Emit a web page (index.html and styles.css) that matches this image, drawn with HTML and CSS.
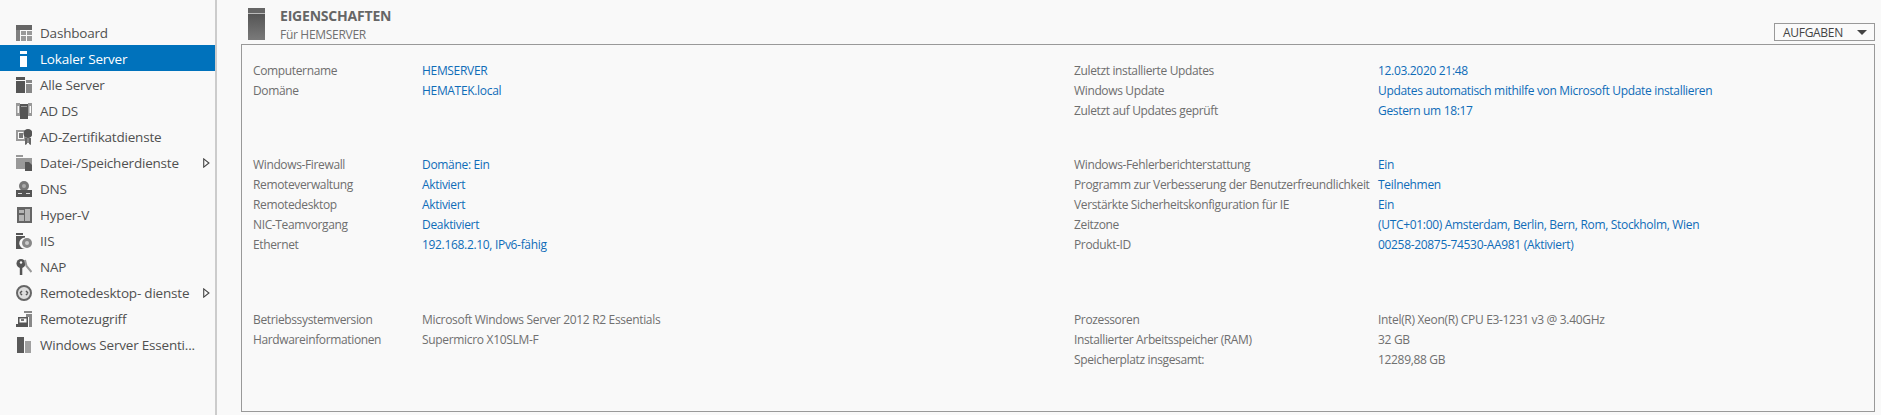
FILE: index.html
```html
<!DOCTYPE html>
<html lang="de">
<head>
  <meta charset="UTF-8">
  <title>Lokaler Server</title>
  <link rel="stylesheet" href="styles.css">
</head>
<body>
  <nav class="sidebar">
    <a class="nav-item">
      <svg class="nav-icon" viewBox="0 0 16 16"><path fill="#666" d="M0 0h16v5H0z"/><path fill="#808080" d="M0 5h4v11H0z"/><path fill="#999" d="M5 6h5v4H5zM11 6h5v4h-5zM5 11h5v5H5zM11 11h5v5h-5z"/></svg>
      <span>Dashboard</span>
    </a>
    <a class="nav-item active">
      <svg class="nav-icon" viewBox="0 0 16 16"><path fill="#fff" d="M4 0h7v3H4zM4 5h7v11H4z"/></svg>
      <span>Lokaler Server</span>
    </a>
    <a class="nav-item">
      <svg class="nav-icon" viewBox="0 0 16 16"><path fill="#555" d="M0 0h9v3H0zM0 4h9v12H0z"/><path fill="#888" d="M10 3h6v3h-6zM10 7h6v9h-6z"/></svg>
      <span>Alle Server</span>
    </a>
    <a class="nav-item">
      <svg class="nav-icon" viewBox="0 0 16 16"><path fill="#999" d="M0 0h4v13H0V0zm1.500 3v7H3V3zM12 0h4v13h-4V0zm1.500 3v7H15V3z"/><path fill="#555" d="M4 1h8v15H4z"/><path fill="#999" d="M5 3h6v1H5z"/></svg>
      <span>AD DS</span>
    </a>
    <a class="nav-item">
      <svg class="nav-icon" viewBox="0 0 16 16"><path fill="#999" d="M0 1h10v11H0V1zm2 2v7h6V3z"/><path fill="#777" d="M3 4h4v5H3z"/><circle cx="12" cy="4.500" r="4.500" fill="#555"/><path fill="#666" d="M9 9h2v6l-2 1zM13 9h2v7l-2-1z"/><path fill="#888" d="M11 9h2v5h-2z"/></svg>
      <span>AD-Zertifikatdienste</span>
    </a>
    <a class="nav-item has-children">
      <svg class="nav-icon" viewBox="0 0 16 16"><path fill="#999" d="M0 0h7v2H0zM0 3h16v9H9v2H0z"/><path fill="#555" d="M9 7h4l3 3v6H9z"/></svg>
      <span>Datei-/Speicherdienste</span>
      <svg class="nav-arrow" viewBox="0 0 6 9"><path fill="none" stroke="#444" d="M.5.800 5.200 4.500.5 8.200z"/></svg>
    </a>
    <a class="nav-item">
      <svg class="nav-icon" viewBox="0 0 16 16"><circle cx="8" cy="5" r="5" fill="#777"/><circle cx="8" cy="5" r="2" fill="#aaa"/><path fill="#555" d="M0 9h16v7H0z"/><path fill="#ddd" d="M2 12h4v1H2zM10 12h4v1h-4z"/></svg>
      <span>DNS</span>
    </a>
    <a class="nav-item">
      <svg class="nav-icon" viewBox="0 0 16 16"><path fill="#666" d="M1 0h15v16H1z"/><path fill="#b5b5b5" d="M3 3h5v3H3zM9 2h5v12H9zM3 8h5v6H3z"/></svg>
      <span>Hyper-V</span>
    </a>
    <a class="nav-item">
      <svg class="nav-icon" viewBox="0 0 16 16"><path fill="#555" d="M0 0h7v2H0zM0 3h9v1.500a5 5 0 0 0 0 11.500H0z"/><circle cx="11" cy="10" r="5" fill="#888"/><circle cx="11" cy="10" r="2" fill="#ccc"/></svg>
      <span>IIS</span>
    </a>
    <a class="nav-item">
      <svg class="nav-icon" viewBox="0 0 16 16"><circle cx="5" cy="4.500" r="4.500" fill="#555"/><circle cx="5" cy="3.500" r="1.200" fill="#f9f9f9"/><path fill="#555" d="M3.800 8h2.500v8H3.800z"/><path fill="none" stroke="#999" stroke-width="2" d="M9 1l1.500 6 5 6"/></svg>
      <span>NAP</span>
    </a>
    <a class="nav-item has-children">
      <svg class="nav-icon" viewBox="0 0 16 16"><circle cx="8" cy="8" r="7" fill="#ddd" stroke="#666" stroke-width="2"/><path fill="none" stroke="#555" stroke-width="1.500" d="M4 8l2 2M6 6l-2 2M12 8l-2-2M10 10l2-2"/></svg>
      <span>Remotedesktop- dienste</span>
      <svg class="nav-arrow" viewBox="0 0 6 9"><path fill="none" stroke="#444" d="M.5.800 5.200 4.500.5 8.200z"/></svg>
    </a>
    <a class="nav-item">
      <svg class="nav-icon" viewBox="0 0 16 16"><path fill="#888" d="M8 0h8v2H8zM10 3h6v13h-3V6h-3z"/><path fill="#555" d="M2 6h10v7H2V6zm1.500 1.500v4h7v-4z"/><path fill="#555" d="M0 13h12v3H0z"/><path fill="#777" d="M5 8h3v2H5z"/></svg>
      <span>Remotezugriff</span>
    </a>
    <a class="nav-item">
      <svg class="nav-icon" viewBox="0 0 16 16"><path fill="#5a5a5a" d="M1 0h7v16H1z"/><path fill="#a0a0a0" d="M9 4h6v12H9z"/></svg>
      <span>Windows Server Essenti...</span>
    </a>
  </nav>

  <main class="content">
    <header class="page-head">
      <svg class="head-icon" viewBox="0 0 17 32">
        <defs><linearGradient id="tower" x1="0" y1="0" x2="0" y2="1"><stop offset="0" stop-color="#555"/><stop offset="1" stop-color="#7a7a7a"/></linearGradient></defs>
        <path fill="#666" d="M0 0h17v5H0z"/><path fill="#bbb" d="M0 5h17v1H0z"/><path fill="url(#tower)" d="M0 6h17v26H0z"/>
      </svg>
      <div class="head-titles">
        <h1>EIGENSCHAFTEN</h1>
        <p>Für HEMSERVER</p>
      </div>
      <button class="tasks-btn">AUFGABEN<span class="caret"></span></button>
    </header>

    <section class="panel">
      <div class="group group-top">
        <dl class="props props-left">
          <dt>Computername</dt><dd class="link">HEMSERVER</dd>
          <dt>Domäne</dt><dd class="link">HEMATEK.local</dd>
        </dl>
        <dl class="props props-right">
          <dt>Zuletzt installierte Updates</dt><dd class="link">12.03.2020 21:48</dd>
          <dt>Windows Update</dt><dd class="link">Updates automatisch mithilfe von Microsoft Update installieren</dd>
          <dt>Zuletzt auf Updates geprüft</dt><dd class="link">Gestern um 18:17</dd>
        </dl>
      </div>
      <div class="group group-mid">
        <dl class="props props-left">
          <dt>Windows-Firewall</dt><dd class="link">Domäne: Ein</dd>
          <dt>Remoteverwaltung</dt><dd class="link">Aktiviert</dd>
          <dt>Remotedesktop</dt><dd class="link">Aktiviert</dd>
          <dt>NIC-Teamvorgang</dt><dd class="link">Deaktiviert</dd>
          <dt>Ethernet</dt><dd class="link">192.168.2.10, IPv6-fähig</dd>
        </dl>
        <dl class="props props-right">
          <dt>Windows-Fehlerberichterstattung</dt><dd class="link">Ein</dd>
          <dt>Programm zur Verbesserung der Benutzerfreundlichkeit</dt><dd class="link">Teilnehmen</dd>
          <dt>Verstärkte Sicherheitskonfiguration für IE</dt><dd class="link">Ein</dd>
          <dt>Zeitzone</dt><dd class="link">(UTC+01:00) Amsterdam, Berlin, Bern, Rom, Stockholm, Wien</dd>
          <dt>Produkt-ID</dt><dd class="link">00258-20875-74530-AA981 (Aktiviert)</dd>
        </dl>
      </div>
      <div class="group group-bottom">
        <dl class="props props-left">
          <dt>Betriebssystemversion</dt><dd>Microsoft Windows Server 2012 R2 Essentials</dd>
          <dt>Hardwareinformationen</dt><dd>Supermicro X10SLM-F</dd>
        </dl>
        <dl class="props props-right">
          <dt>Prozessoren</dt><dd>Intel(R) Xeon(R) CPU E3-1231 v3 @ 3.40GHz</dd>
          <dt>Installierter Arbeitsspeicher (RAM)</dt><dd>32 GB</dd>
          <dt>Speicherplatz insgesamt:</dt><dd>12289,88 GB</dd>
        </dl>
      </div>
    </section>
  </main>
</body>
</html>
```

FILE: styles.css
```css
/* Basic Reset */
* { margin: 0; padding: 0; box-sizing: border-box; }
html, body { height: 100%; }
body {
  display: flex;
  height: 415px;
  overflow: hidden;
  font-family: "Open Sans", "Noto Sans", sans-serif;
  background: #f9f9f9;
  color: #666;
}

/* Sidebar */
.sidebar {
  width: 217px;
  flex-shrink: 0;
  padding-top: 19px;
  border-right: 2px solid #ccc;
}
.nav-item {
  display: flex;
  align-items: center;
  height: 26px;
  padding-left: 16px;
  padding-top: 1px;
  font-size: 13.5px;
  letter-spacing: -0.2px;
  color: #505050;
  white-space: nowrap;
}
.nav-item.active {
  background: #0072bc;
  color: #fff;
}
.nav-icon {
  width: 16px;
  height: 16px;
  margin-right: 8px;
  flex-shrink: 0;
}
.nav-arrow {
  width: 7px;
  height: 10px;
  margin-left: auto;
  margin-right: 5px;
}

/* Main area */
.content {
  flex: 1;
  display: flex;
  flex-direction: column;
  padding: 8px 6px 3px 24px;
}
.page-head {
  display: flex;
  height: 36px;
  padding-left: 7px;
}
.head-icon {
  width: 17px;
  height: 32px;
  margin-right: 15px;
}
.head-titles h1 {
  font-size: 14px;
  line-height: 16px;
  font-weight: 700;
  letter-spacing: -0.2px;
  color: #666;
}
.head-titles p {
  margin-top: 3px;
  font-size: 12px;
  line-height: 15px;
  letter-spacing: -0.3px;
  color: #707070;
}
.tasks-btn {
  display: flex;
  align-items: center;
  justify-content: space-between;
  width: 101px;
  height: 18px;
  margin-left: auto;
  margin-top: 15px;
  padding: 0 7px 0 8px;
  border: 1px solid #999;
  background: #fafafa;
  font-family: inherit;
  font-size: 12px;
  letter-spacing: -0.3px;
  color: #444;
}
.caret {
  width: 0;
  height: 0;
  border-left: 5px solid transparent;
  border-right: 5px solid transparent;
  border-top: 5px solid #444;
}

/* Properties panel */
.panel {
  flex: 1;
  display: flex;
  flex-direction: column;
  padding: 15px 11px 0;
  border: 1px solid #999;
}
.group {
  display: flex;
}
.group-top { height: 94px; }
.group-mid { height: 155px; }
.props {
  display: grid;
  grid-auto-rows: 20px;
  align-items: center;
  font-size: 12px;
  letter-spacing: -0.32px;
  white-space: nowrap;
}
.props dt {
  letter-spacing: -0.36px;
  color: #6e6e6e;
}
.props dd {
  color: #707070;
}
.props-left {
  width: 821px;
  grid-template-columns: 169px 1fr;
}
.props-right {
  grid-template-columns: 304px 1fr;
}
.props .link {
  color: #0f6cb8;
}
```
